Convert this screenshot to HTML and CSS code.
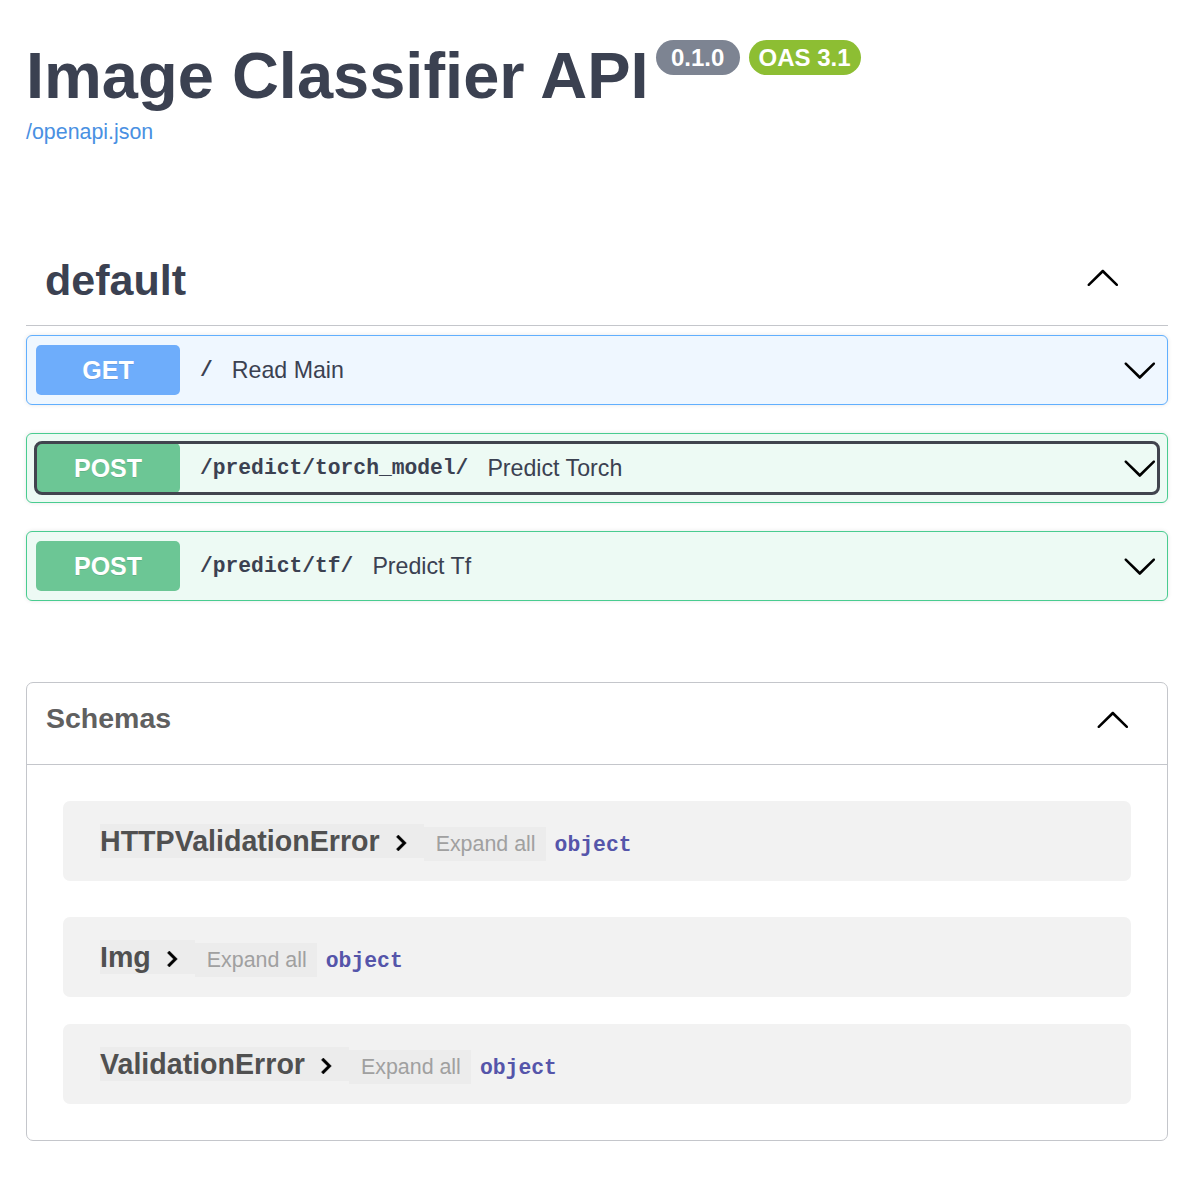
FILE: index.html
```html
<!DOCTYPE html>
<html lang="en">
<head>
<meta charset="utf-8">
<title>Image Classifier API - Swagger UI</title>
<link rel="stylesheet" href="styles.css">
</head>
<body>
<div class="wrapper">
  <div class="info">
    <div class="title-row">
      <h1 class="title">Image Classifier API</h1>
      <span class="pill pill-version">0.1.0</span>
      <span class="pill pill-oas">OAS 3.1</span>
    </div>
    <a class="spec-link" href="#">/openapi.json</a>
  </div>

  <section class="tag-section">
    <div class="tag-header">
      <h3 class="tag-name">default</h3>
      <svg class="arrow arrow-up tag-arrow" viewBox="0 0 20 20"><path d="M17.418 6.109c.272-.268.709-.268.979 0s.271.701 0 .969l-7.908 7.83c-.27.268-.707.268-.979 0l-7.908-7.83c-.27-.268-.27-.701 0-.969.271-.268.709-.268.979 0L10 13.25l7.418-7.141z"/></svg>
    </div>
    <div class="ops">
      <div class="opblock opblock-get">
        <div class="summary">
          <span class="method">GET</span>
          <span class="path">/</span>
          <span class="desc">Read Main</span>
          <svg class="arrow" viewBox="0 0 20 20"><path d="M17.418 6.109c.272-.268.709-.268.979 0s.271.701 0 .969l-7.908 7.83c-.27.268-.707.268-.979 0l-7.908-7.83c-.27-.268-.27-.701 0-.969.271-.268.709-.268.979 0L10 13.25l7.418-7.141z"/></svg>
        </div>
      </div>
      <div class="opblock opblock-post">
        <div class="summary focused">
          <span class="method">POST</span>
          <span class="path">/predict/torch_model/</span>
          <span class="desc">Predict Torch</span>
          <svg class="arrow" viewBox="0 0 20 20"><path d="M17.418 6.109c.272-.268.709-.268.979 0s.271.701 0 .969l-7.908 7.83c-.27.268-.707.268-.979 0l-7.908-7.83c-.27-.268-.27-.701 0-.969.271-.268.709-.268.979 0L10 13.25l7.418-7.141z"/></svg>
        </div>
      </div>
      <div class="opblock opblock-post">
        <div class="summary">
          <span class="method">POST</span>
          <span class="path">/predict/tf/</span>
          <span class="desc">Predict Tf</span>
          <svg class="arrow" viewBox="0 0 20 20"><path d="M17.418 6.109c.272-.268.709-.268.979 0s.271.701 0 .969l-7.908 7.83c-.27.268-.707.268-.979 0l-7.908-7.83c-.27-.268-.27-.701 0-.969.271-.268.709-.268.979 0L10 13.25l7.418-7.141z"/></svg>
        </div>
      </div>
    </div>
  </section>

  <section class="models">
    <div class="models-header">
      <h4 class="models-title">Schemas</h4>
      <svg class="arrow arrow-up models-arrow" viewBox="0 0 20 20"><path d="M17.418 6.109c.272-.268.709-.268.979 0s.271.701 0 .969l-7.908 7.83c-.27.268-.707.268-.979 0l-7.908-7.83c-.27-.268-.27-.701 0-.969.271-.268.709-.268.979 0L10 13.25l7.418-7.141z"/></svg>
    </div>
    <div class="models-body">
      <div class="model-container mc-1">
        <div class="model-row">
          <span class="m-btn"><span class="m-title">HTTPValidationError</span><svg class="toggle" viewBox="0 0 24 24"><path d="M10 6 8.59 7.41 13.17 12l-4.58 4.59L10 18l6-6z"/></svg></span>
          <span class="m-expand">Expand all</span>
          <span class="m-type">object</span>
        </div>
      </div>
      <div class="model-container mc-2">
        <div class="model-row">
          <span class="m-btn"><span class="m-title">Img</span><svg class="toggle" viewBox="0 0 24 24"><path d="M10 6 8.59 7.41 13.17 12l-4.58 4.59L10 18l6-6z"/></svg></span>
          <span class="m-expand">Expand all</span>
          <span class="m-type">object</span>
        </div>
      </div>
      <div class="model-container">
        <div class="model-row">
          <span class="m-btn"><span class="m-title">ValidationError</span><svg class="toggle" viewBox="0 0 24 24"><path d="M10 6 8.59 7.41 13.17 12l-4.58 4.59L10 18l6-6z"/></svg></span>
          <span class="m-expand">Expand all</span>
          <span class="m-type">object</span>
        </div>
      </div>
    </div>
  </section>
</div>
</body>
</html>
```

FILE: styles.css
```css
* { box-sizing: border-box; }

body {
  margin: 0;
  background: #ffffff;
  font-family: "Liberation Sans", Arial, sans-serif;
  color: #3b4151;
}

.wrapper {
  width: 1142px;
  margin-left: 26px;
}

/* ---------- info ---------- */
.info {
  padding-top: 38px;
}

.title-row {
  display: flex;
  align-items: flex-start;
}

.title {
  margin: 0;
  font-size: 65px;
  line-height: 76px;
  font-weight: 700;
  color: #3b4151;
}

.pill {
  margin-top: 2px;
  height: 35px;
  line-height: 35px;
  border-radius: 18px;
  font-size: 24px;
  font-weight: 700;
  color: #ffffff;
  text-align: center;
}

.pill-version {
  width: 84px;
  margin-left: 7px;
  background: #7d8492;
}

.pill-oas {
  width: 112px;
  margin-left: 9px;
  background: #8dbe33;
}

.spec-link {
  display: block;
  margin-top: 6px;
  font-size: 21.4px;
  line-height: 24px;
  color: #4990e2;
  text-decoration: none;
  width: max-content;
}

/* ---------- tag ---------- */
.tag-section {
  margin-top: 97px;
}

.tag-header {
  display: flex;
  align-items: flex-start;
  border-bottom: 1px solid #c4c6cb;
  height: 85px;
}

.tag-name {
  margin: 0;
  padding: 14px 0 20px 19px;
  font-size: 43px;
  line-height: 50px;
  font-weight: 700;
  color: #3b4151;
}

.arrow {
  width: 35.6px;
  height: 35.6px;
  fill: #000000;
  flex: none;
}

.arrow-up {
  transform: rotate(180deg);
}

.tag-arrow {
  margin-left: auto;
  margin-right: 47px;
  margin-top: 20px;
}

.ops {
  margin-top: 9px;
}

.opblock {
  border: 1px solid;
  border-radius: 6px;
  padding: 9px;
  margin-bottom: 28px;
  box-shadow: 0 0 4px rgba(0, 0, 0, 0.1);
}

.opblock:last-child {
  margin-bottom: 0;
}

.opblock-get {
  border-color: #61affe;
  background: #eff7ff;
}

.opblock-post {
  border-color: #49cc90;
  background: #edfaf4;
}

.summary {
  display: flex;
  align-items: center;
  height: 50px;
  border-radius: 6px;
}

.summary.focused {
  outline: 3px solid #41444e;
  outline-offset: -1px;
}

.method {
  width: 144px;
  height: 50px;
  line-height: 50px;
  border-radius: 5px;
  text-align: center;
  font-size: 25px;
  font-weight: 700;
  color: #ffffff;
  text-shadow: 0 1px 0 rgba(0, 0, 0, 0.1);
  flex: none;
}

.opblock-get .method { background: #6eadfb; }
.opblock-post .method { background: #6cc695; }

.path {
  margin-left: 20px;
  font-family: "Liberation Mono", "Courier New", monospace;
  font-weight: 700;
  font-size: 21.3px;
  color: #3b4151;
}

.desc {
  margin-left: 19px;
  font-size: 23.2px;
  color: #3b4151;
}

.summary .arrow {
  margin-left: auto;
}

/* ---------- models ---------- */
.models {
  margin-top: 81px;
  border: 1px solid #c4c6cb;
  border-radius: 7px;
}

.models-header {
  display: flex;
  align-items: flex-start;
  height: 82px;
  border-bottom: 1px solid #c4c6cb;
}

.models-title {
  margin: 0;
  padding: 18px 0 0 19px;
  font-size: 28.5px;
  line-height: 34px;
  font-weight: 700;
  color: #606060;
}

.models-arrow {
  margin-left: auto;
  margin-right: 36px;
  margin-top: 20px;
}

.models-body {
  padding: 36px 36px 36px;
}

.model-container {
  background: #f2f2f2;
  border-radius: 7px;
  padding: 23px 37px;
}

.mc-1 { margin-bottom: 36px; }
.mc-2 { margin-bottom: 27px; }

.model-row {
  display: flex;
  align-items: baseline;
  height: 34px;
}

.m-btn {
  display: inline-flex;
  align-items: center;
  height: 34px;
  padding-right: 7px;
  background: rgba(0, 0, 0, 0.025);
}

.m-title {
  font-size: 28.6px;
  line-height: 34px;
  font-weight: 700;
  color: #505050;
}

.toggle {
  width: 32px;
  height: 32px;
  margin-left: 5px;
  margin-top: 3px;
  fill: #000000;
  stroke: #000000;
  stroke-width: 0.4;
}

.m-expand {
  height: 34px;
  line-height: 34px;
  padding: 0 10px 0 12px;
  font-size: 21.4px;
  color: #a0a0a0;
  background: rgba(0, 0, 0, 0.025);
}

.m-type {
  margin-left: 9px;
  font-family: "Liberation Mono", "Courier New", monospace;
  font-weight: 700;
  font-size: 21.4px;
  color: #55a;
}
```
